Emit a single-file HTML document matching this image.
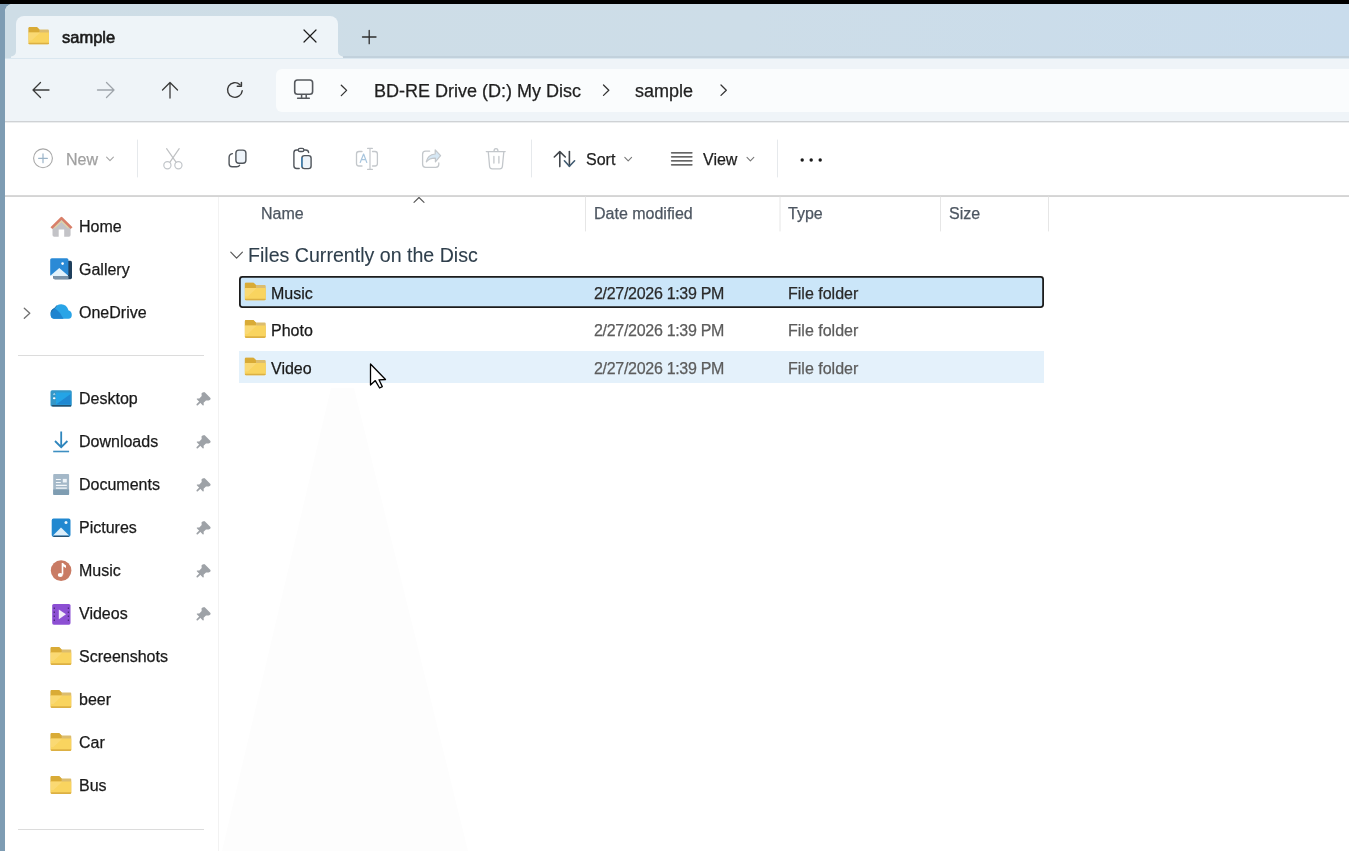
<!DOCTYPE html>
<html><head><meta charset="utf-8">
<style>
*{margin:0;padding:0;box-sizing:border-box}
html,body{-webkit-font-smoothing:antialiased;width:1349px;height:851px;overflow:hidden;background:#7e9cb3;font-family:"Liberation Sans",sans-serif;color:#1a1a1a}
.a{position:absolute}
.t{position:absolute;white-space:nowrap;line-height:20px;will-change:transform;-webkit-text-stroke:0.25px currentColor}
#blk{left:0;top:0;width:1349px;height:4px;background:#000}
#win{left:5px;top:4px;width:1350px;height:851px;background:#fff;border-top-left-radius:8px;overflow:hidden}
#title{left:0;top:0;width:1344px;height:54px;background:linear-gradient(90deg,#cedde6 0%,#cddde8 55%,#c9dcec 100%)}
#tab{left:11px;top:12px;width:322px;height:42px;background:#eef4f8;border-radius:8px 8px 0 0}
#tline{left:337px;top:52px;width:1007px;height:2px;background:#c2d1dc}
#navtop{left:0;top:54px;width:1344px;height:1px;background:#dae7f0}
#nav{left:0;top:55px;width:1344px;height:62px;background:#eff4f8}
#addr{left:271px;top:65px;width:1080px;height:43px;background:#fafcfd;border-radius:6px}
#navline{left:0;top:117px;width:1344px;height:1px;background:#cfd2d5}
#navline2{left:0;top:118px;width:1344px;height:1px;background:#eceeef}
#tool{left:0;top:119px;width:1344px;height:72px;background:#fff}
#toolline{left:0;top:191px;width:1344px;height:2px;background:linear-gradient(#dadada,#d2d2d2)}
#side{left:0;top:193px;width:212px;height:660px;background:#fff}
#sideb{left:213px;top:193px;width:1px;height:660px;background:#f2f2f2}
.sep{position:absolute;height:1px;background:#dcdcdc}
.vsep{position:absolute;width:1px;background:#e6e9ec}
svg{position:absolute;overflow:visible}
.side .t{font-size:16px}
</style></head><body>
<div id="blk" class="a"></div>
<div id="win" class="a">
  <div id="title" class="a"></div>
  <div id="tab" class="a"></div>
  <div id="tline" class="a"></div>
  <div id="nav" class="a"></div>
  <div id="navtop" class="a"></div>
  <div id="addr" class="a"></div>
  <div id="navline" class="a"></div>
  <div id="navline2" class="a"></div>
  <div id="tool" class="a"></div>
  <div id="toolline" class="a"></div>
  <div id="side" class="a"></div>
  <div id="sideb" class="a"></div>
</div>

<svg width="1349" height="851" style="left:0;top:0"><path d="M331 388H354L468 851H222Z" fill="#fdfdfd"/></svg>
<svg width="1349" height="851" style="left:0;top:0"><path d="M338 51.5A5 5 0 0 0 343 56.5V58H338Z" fill="#eef4f8"/><path d="M16 51.5A5 5 0 0 1 11 56.5V58H16Z" fill="#eef4f8"/></svg>
<!-- tab content (absolute page coords) -->
<div class="t" style="left:62px;top:27px;font-size:16.5px;-webkit-text-stroke:0.6px #1a1a1a">sample</div>
<div class="t" style="left:374px;top:81px;font-size:18px;color:#1f1f1f">BD-RE Drive (D:) My Disc</div>
<div class="t" style="left:635px;top:81px;font-size:18px;color:#1f1f1f">sample</div>

<!-- toolbar text -->
<div class="t" style="left:66px;top:150px;font-size:16px;color:#a0a0a0">New</div>
<div class="t" style="left:586px;top:150px;font-size:16px;color:#1f1f1f">Sort</div>
<div class="t" style="left:703px;top:150px;font-size:16px;color:#1f1f1f">View</div>

<!-- sidebar -->
<div class="side">
<div class="t" style="left:79px;top:217px">Home</div>
<div class="t" style="left:79px;top:260px">Gallery</div>
<div class="t" style="left:79px;top:303px">OneDrive</div>
<div class="t" style="left:79px;top:389px">Desktop</div>
<div class="t" style="left:79px;top:432px">Downloads</div>
<div class="t" style="left:79px;top:475px">Documents</div>
<div class="t" style="left:79px;top:518px">Pictures</div>
<div class="t" style="left:79px;top:561px">Music</div>
<div class="t" style="left:79px;top:604px">Videos</div>
<div class="t" style="left:79px;top:647px">Screenshots</div>
<div class="t" style="left:79px;top:690px">beer</div>
<div class="t" style="left:79px;top:733px">Car</div>
<div class="t" style="left:79px;top:776px">Bus</div>
</div>
<div class="sep" style="left:18px;top:355px;width:186px"></div>
<div class="sep" style="left:18px;top:829px;width:186px"></div>

<!-- headers -->
<div class="t" style="left:261px;top:204px;font-size:16px;color:#4d5661">Name</div>
<div class="t" style="left:594px;top:204px;font-size:16px;color:#4d5661">Date modified</div>
<div class="t" style="left:788px;top:204px;font-size:16px;color:#4d5661">Type</div>
<div class="t" style="left:949px;top:204px;font-size:16px;color:#4d5661">Size</div>
<div class="t" style="left:248px;top:245px;font-size:19.6px;color:#2f3f4c;-webkit-text-stroke:0.1px #2f3f4c">Files Currently on the Disc</div>

<!-- rows -->
<svg width="1349" height="851" style="left:0;top:0"><rect x="239.9" y="276.9" width="803.2" height="30.2" rx="2.5" fill="#cbe6f9" stroke="#1c1c1c" stroke-width="1.8"/></svg>
<div class="a" style="left:239px;top:351px;width:805px;height:32px;background:#e4f1fb"></div>
<div class="t" style="left:271px;top:284px;font-size:16px">Music</div>
<div class="t" style="left:271px;top:321px;font-size:16px">Photo</div>
<div class="t" style="left:271px;top:359px;font-size:16px">Video</div>
<div class="t" style="left:594px;top:284px;font-size:16px;letter-spacing:-0.3px;color:#2a2a2a">2/27/2026 1:39 PM</div>
<div class="t" style="left:594px;top:321px;font-size:16px;letter-spacing:-0.3px;color:#5c5c5c">2/27/2026 1:39 PM</div>
<div class="t" style="left:594px;top:359px;font-size:16px;letter-spacing:-0.3px;color:#5c5c5c">2/27/2026 1:39 PM</div>
<div class="t" style="left:788px;top:284px;font-size:16px;color:#2a2a2a">File folder</div>
<div class="t" style="left:788px;top:321px;font-size:16px;color:#5c5c5c">File folder</div>
<div class="t" style="left:788px;top:359px;font-size:16px;color:#5c5c5c">File folder</div>


<svg width="1349" height="851" style="left:0;top:0">
<defs>
<symbol id="fold" viewBox="0 0 21 18">
 <path d="M0 1.4Q0 0 1.4 0H8.6L11.2 2.6H19.8Q21 2.6 21 3.8V16H0Z" fill="#dcbd6e"/>
 <path d="M0 1.4Q0 0 1.4 0H8.6L11.2 2.6V6H0Z" fill="#d9ab36"/>
 <path d="M0 5.6H21V16.6Q21 18 19.6 18H1.4Q0 18 0 16.6Z" fill="#f9d45f"/>
 <path d="M0 5.6H12L3 14H0Z" fill="#fbdc7c" opacity="0.7"/>
 <path d="M0 16.2H21V16.6Q21 18 19.6 18H1.4Q0 18 0 16.6Z" fill="#dcb043"/>
</symbol>
</defs>
<g fill="none" stroke-linecap="round" stroke-linejoin="round">
<!-- tab -->
<use href="#fold" x="28" y="27" width="21.5" height="17.5"/>
<path d="M304 30L316 42M316 30L304 42" stroke="#1c1c1c" stroke-width="1.2"/>
<path d="M362.5 37H376M369.2 30.5V43.7" stroke="#2e2e2e" stroke-width="1.3"/>
<!-- nav -->
<path d="M33 90H49M40.5 82.5L33 90L40.5 97.5" stroke="#3a3a3a" stroke-width="1.3"/>
<path d="M97.5 90H114M106.5 82.5L114 90L106.5 97.5" stroke="#9ea4aa" stroke-width="1.3"/>
<path d="M170 82.5V98M162.5 90L170 82.5L177.5 90" stroke="#3a3a3a" stroke-width="1.3"/>
<path d="M242.2 90.8A7.35 7.35 0 1 1 240 84.7" stroke="#3a3a3a" stroke-width="1.4"/>
<path d="M241.4 82.4V86.3H237.3" stroke="#3a3a3a" stroke-width="1.5"/>
<rect x="294.7" y="80" width="17.9" height="14.3" rx="2.8" stroke="#55595e" stroke-width="1.6"/>
<path d="M301.6 95V97.8M306.2 95V97.8M297.6 98.2H309.3" stroke="#55595e" stroke-width="1.5"/>
<path d="M341.3 85.2L346.6 90.4L341.3 95.6" stroke="#333" stroke-width="1.3"/>
<path d="M603.5 85L608.8 90.2L603.5 95.4" stroke="#333" stroke-width="1.3"/>
<path d="M721 85L726.3 90.2L721 95.4" stroke="#333" stroke-width="1.3"/>
<!-- toolbar -->
<circle cx="43" cy="158.3" r="9.4" stroke="#a8a8a8" stroke-width="1.1"/>
<path d="M38.6 158.3H47.4M43 153.9V162.7" stroke="#9bb4c8" stroke-width="1.2"/>
<path d="M106.6 157.2L110 160.7L113.4 157.2" stroke="#a6a6a6" stroke-width="1.1"/>
<path d="M137.5 140V177M531.5 140V177M777.5 140V177" stroke="#e6e9ec" stroke-width="1"/>
<!-- cut -->
<path d="M166.6 148.7L176.2 162.4M179.2 148.7L169.8 162.4" stroke="#bfc1c3" stroke-width="1.2"/>
<circle cx="167.4" cy="165.2" r="3.6" stroke="#c2c6ca" stroke-width="1.2"/>
<circle cx="178.4" cy="165.2" r="3.6" stroke="#c2c6ca" stroke-width="1.2"/>
<!-- copy -->
<rect x="235.9" y="150.1" width="10" height="13.2" rx="3" fill="#eef4fa" stroke="#50555b" stroke-width="1.4"/>
<path d="M232.4 153.6Q229.1 154.2 229.1 157.5V163.8Q229.1 166.8 232.1 166.8H236.5Q239 166.8 239.6 165.3" stroke="#50555b" stroke-width="1.4"/>
<!-- paste -->
<path d="M298 150H296.6Q293.9 150 293.9 152.7V165.8Q293.9 168.5 296.6 168.5H299.2M304 150H305.6Q308.4 150 308.6 152.5" stroke="#50555b" stroke-width="1.4"/>
<rect x="298.3" y="148.3" width="5.6" height="3.2" rx="1.6" stroke="#50555b" stroke-width="1.3"/>
<rect x="301.9" y="155.6" width="9.2" height="13" rx="2.6" fill="#eef4fa" stroke="#50555b" stroke-width="1.4"/>
<path d="M301.9 158V166.5" stroke="#3a86c0" stroke-width="1.3"/>
<!-- rename -->
<path d="M362 151.5H359Q356.5 151.5 356.5 154V163.5Q356.5 166 359 166H362M372.5 151.5H375Q377.4 151.5 377.4 154V163.5Q377.4 166 375 166H372.5" stroke="#c3c7cb" stroke-width="1.3"/>
<path d="M370 148.4V169.4M367.6 148.4H372.4M367.6 169.4H372.4" stroke="#c3c7cb" stroke-width="1.2"/>
<path d="M360.2 162.5L363.6 154L366.8 162.5M361.3 159.7H365.8" stroke="#a9c6de" stroke-width="1.2"/>
<!-- share -->
<path d="M429.6 151.2H425.6Q422.6 151.2 422.6 154.2V164.3Q422.6 167.3 425.6 167.3H435.8Q438.8 167.3 438.8 164.3V163" stroke="#c3c7cb" stroke-width="1.3"/>
<path d="M426.3 161.8Q427.5 154.8 435.2 154V149.8L440.6 155.6L435.4 161.8V158.2Q429.5 158 426.3 161.8Z" fill="#d6e7f4" stroke="#c3c7cb" stroke-width="1.2"/>
<!-- delete -->
<path d="M486.3 151.6H505.2M494 151.4Q494 148.6 496 148.6Q498 148.6 498 151.4M488.3 152L489.6 166.5Q489.9 168.8 492.2 168.8H499.8Q502.1 168.8 502.4 166.5L503.8 152M493.9 156.4V163M498.9 156.4V163" stroke="#c3c7cb" stroke-width="1.3"/>
<!-- sort -->
<path d="M559.8 151.8V166.6M554.3 157L559.8 151.6L565.3 157" stroke="#42464b" stroke-width="1.6"/>
<path d="M569.4 151.5V166.2" stroke="#42464b" stroke-width="1.6"/><path d="M564.4 160.8L569.4 166.3L574.6 160.8" stroke="#3f5a70" stroke-width="1.6"/>
<path d="M624.8 157.4L628.2 160.8L631.6 157.4" stroke="#777" stroke-width="1.1"/>
<!-- view -->
<path d="M671.5 152.8H692M671.5 156.8H692M671.5 160.8H692M671.5 164.8H692" stroke="#333" stroke-width="1.3"/>
<path d="M747 157.4L750.4 160.8L753.8 157.4" stroke="#777" stroke-width="1.1"/>
<circle cx="802.2" cy="160" r="1.7" fill="#1a1a1a" stroke="none"/>
<circle cx="811.2" cy="160" r="1.7" fill="#1a1a1a" stroke="none"/>
<circle cx="820.2" cy="160" r="1.7" fill="#1a1a1a" stroke="none"/>
<!-- headers -->
<path d="M585.5 197V231M780 197V231M940.5 197V231M1048.5 197V231" stroke="#e6e6e6" stroke-width="1"/>
<path d="M414 202.3L419 197.5L424 202.3" stroke="#555" stroke-width="1.1"/>
<path d="M230.8 252.2L236.6 258.2L242.4 252.2" stroke="#5a5a5a" stroke-width="1.2"/>
<!-- rows folders -->
<use href="#fold" x="244.5" y="282.5" width="21.5" height="18"/>
<use href="#fold" x="244.5" y="320" width="21.5" height="18"/>
<use href="#fold" x="244.5" y="357.5" width="21.5" height="18"/>
<!-- sidebar folders -->
<use href="#fold" x="50.3" y="647" width="21.3" height="18"/>
<use href="#fold" x="50.3" y="690" width="21.3" height="18"/>
<use href="#fold" x="50.3" y="733" width="21.3" height="18"/>
<use href="#fold" x="50.3" y="776" width="21.3" height="18"/>
<!-- onedrive chevron -->
<path d="M24.3 308.3L29.8 313.3L24.3 318.3" stroke="#707070" stroke-width="1.3"/>
</g>
<!-- home -->
<path d="M52.5 226V235Q52.5 236.8 54.3 236.8H58.7V229.5H64.2V236.8H68.8Q70.6 236.8 70.6 235V226L61.5 218.5Z" fill="#c3c3c7"/>
<path d="M51.4 228.2L61.5 218.1L71.6 228.2" fill="none" stroke="#d97f68" stroke-width="2.6" stroke-linejoin="round"/>
<path d="M54.5 228L61.5 221.3L68.5 228" fill="none" stroke="#f5dc8a" stroke-width="1"/>
<!-- gallery -->
<rect x="53.3" y="260.8" width="18.7" height="18.4" rx="1.6" fill="#1f3f5c"/>
<path d="M53.3 276H68.5V279.2H54.8Q53.3 279.2 53.3 277.7Z" fill="#7a93a8"/>
<rect x="50.2" y="258.2" width="18.2" height="17.8" rx="1.6" fill="#2a8ad6"/>
<path d="M50.6 275.4L59.3 267.9L68 275.4V276H50.6Z" fill="#e2f2fb"/>
<circle cx="62.6" cy="263.6" r="1.3" fill="#fff"/>
<!-- onedrive -->
<path d="M53.8 318.7H68.5Q71.8 318.7 71.8 315Q71.8 311.3 68.6 310.6Q66.6 304.3 61.2 304.3Q56.6 304.3 54.4 308.3Q50.6 309.6 50.6 313.8Q50.6 318.7 53.8 318.7Z" fill="#29a4e7"/>
<path d="M50.6 313.8Q50.6 318.7 53.8 318.7H63.5L60 313L57.5 310.5Q56 309 54.4 308.3Q50.6 309.6 50.6 313.8Z" fill="#1e84cf"/>
<path d="M51.2 312.3Q52 309.2 54.6 308.5Q55.5 306.6 57 305.6" fill="none" stroke="#2f6590" stroke-width="0.9" opacity="0.8"/>
<!-- desktop -->
<rect x="50.5" y="390.3" width="21.3" height="16.2" rx="1.6" fill="#3497c8"/>
<path d="M56 392.5H70.6V404.5H56Z" fill="#24a4e6"/>
<path d="M56 404.5L70.6 394V404.5Z" fill="#1f88d2"/>
<path d="M51.5 405.3H71V406.5H52.5Z" fill="#1c3a55"/>
<path d="M52.8 394.6L54.2 393.2L55.6 394.6Z" fill="#fff"/>
<ellipse cx="54.2" cy="398.3" rx="1.3" ry="1" fill="#fff"/>
<!-- downloads -->
<path d="M61.2 431.5V447M55 441L61.2 447.2L67.4 441" fill="none" stroke="#2f86bd" stroke-width="1.8"/>
<path d="M53.2 451.5H69.1" fill="none" stroke="#3d8fc2" stroke-width="1.6"/>
<!-- documents -->
<rect x="53.2" y="473.9" width="15.9" height="21" rx="1" fill="#a4b8c8"/>
<path d="M53.2 489.5H69.1V494Q69.1 494.9 68.1 494.9H54.2Q53.2 494.9 53.2 494Z" fill="#7f9db2"/>
<path d="M55.9 479.5H60.8M55.9 482.5H60.8M55.9 485.3H66.8M55.9 488.1H66.8" stroke="#f4f8fb" stroke-width="1.2"/>
<rect x="62.8" y="478.9" width="4" height="3.6" fill="#eef4f9"/>
<!-- pictures -->
<rect x="51.7" y="518.6" width="18.8" height="18.3" rx="1.8" fill="#2188d0"/>
<path d="M53 535.5L61 527.5L69.2 535.5Z" fill="#dceefa"/>
<circle cx="66" cy="522.5" r="1.5" fill="#eaf5fc"/>
<path d="M53.5 536.3H68.8" stroke="#2a4760" stroke-width="1.1"/>
<!-- music -->
<circle cx="61.1" cy="570.6" r="10.3" fill="#c97b64"/>
<path d="M62.5 563V574.5" stroke="#fff" stroke-width="1.6"/>
<path d="M62.5 563L66 565.5V568L62.5 566" fill="#fff"/>
<ellipse cx="60.3" cy="575" rx="2.5" ry="2.1" fill="#fff"/>
<!-- videos -->
<rect x="52.2" y="604" width="18.3" height="20.7" rx="1.6" fill="#8c4fd3"/>
<path d="M58.8 609.5L66 614.3L58.8 619.2Z" fill="#f2ecfa"/>
<path d="M54.3 607.5V609M54.3 611.5V613M54.3 615.5V617M54.3 619.5V621M68.4 607.5V609M68.4 611.5V613M68.4 615.5V617M68.4 619.5V621" stroke="#4b2a7a" stroke-width="1.3"/>
<!-- pins -->
<g fill="#9ea2a7">
<g id="pin"><path d="M203.6 392.2Q204.3 391.9 205 392.5L210.2 397.7Q210.9 398.5 210.5 399.2Q210 400.2 208.6 400.6L206 400.4L203.6 402.8L203.8 405Q203.6 405.6 202.9 405.4L196.8 399.3Q196.5 398.6 197.2 398.4L199.3 398.4L201.7 396L201.5 393.6Q201.7 392.6 203.6 392.2Z"/><path d="M197.3 404.6L200.6 401.3" stroke="#9ea2a7" stroke-width="1.7" stroke-linecap="round"/></g>
<use href="#pin" y="43"/>
<use href="#pin" y="86"/>
<use href="#pin" y="129"/>
<use href="#pin" y="172"/>
<use href="#pin" y="215"/>
</g>
<!-- cursor -->
<path d="M370.5 364L370.5 385L375.3 380.6L379.6 388L382.3 386.6L379 379.8L385.5 379.5Z" fill="#fff" stroke="#000" stroke-width="1.3" stroke-linejoin="round"/>
</svg>
</body></html>
